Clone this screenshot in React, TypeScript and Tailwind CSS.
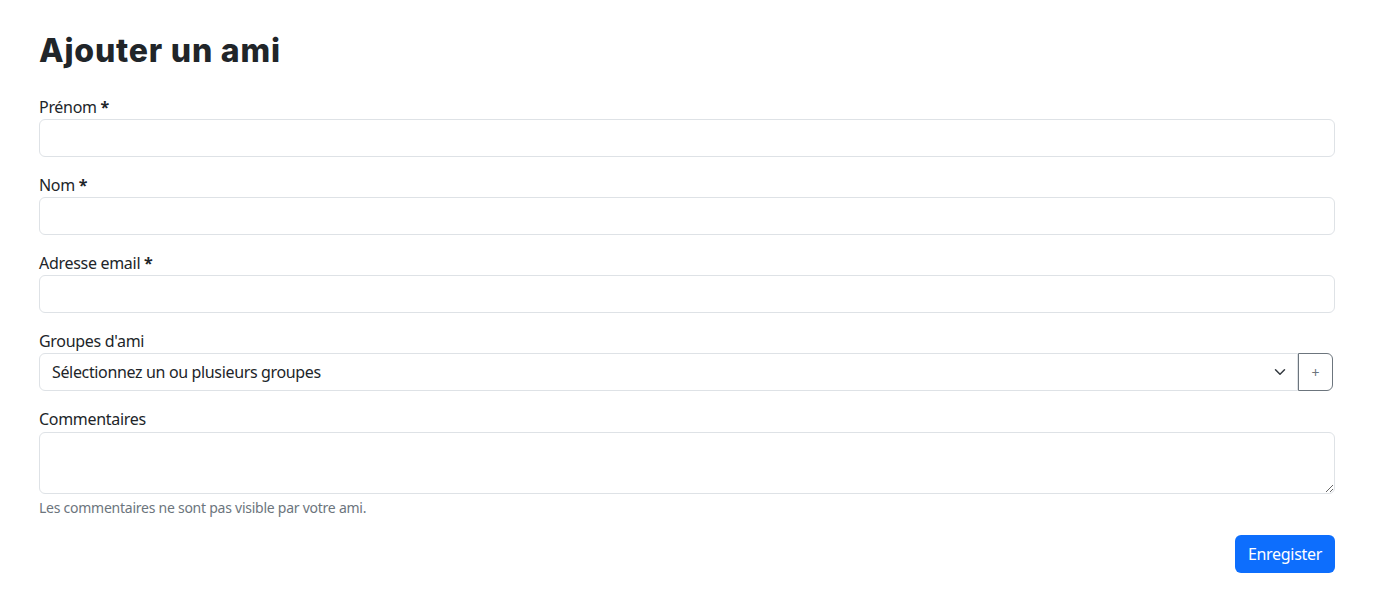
import React from "react";

const font = { fontFamily: '"Noto Sans", "Open Sans", sans-serif' };

function Field({ label, required }: { label: string; required?: boolean }) {
  return (
    <div className="mb-4">
      <label className="block text-[16px] leading-[24px] text-[#212529] tracking-[-0.3px]">
        {label} {required && <span className="font-bold">*</span>}
      </label>
      <input className="block w-full h-[38px] border border-[#dee2e6] rounded-[6px] px-3 outline-none bg-white" />
    </div>
  );
}

export default function App() {
  return (
    <div className="min-h-screen bg-white text-[#212529]" style={font}>
      <div className="w-[1296px] ml-[39px] pt-[32px]">
        <h2 className="font-['Inter',sans-serif] font-extrabold text-[32px] leading-[38px] mb-[25px] text-[#212529] tracking-[0.8px]">
          Ajouter un ami
        </h2>
        <Field label="Prénom" required />
        <Field label="Nom" required />
        <Field label="Adresse email" required />
        <div className="mb-4">
          <label className="block text-[16px] leading-[24px] tracking-[-0.3px]">Groupes d'ami</label>
          <div className="flex">
            <div className="flex-1 h-[38px] border border-[#dee2e6] rounded-l-[6px] flex items-center pl-3 pr-2 justify-between">
              <span className="text-[16px] tracking-[-0.35px]">Sélectionnez un ou plusieurs groupes</span>
              <svg width="16" height="12" viewBox="0 0 16 16" className="mr-[1px]">
                <path d="m2 5 6 6 6-6" fill="none" stroke="#343a40" strokeWidth="2" strokeLinecap="round" strokeLinejoin="round" />
              </svg>
            </div>
            <button className="w-[35px] h-[38px] border border-[#6c757d] rounded-r-[6px] text-[#6c757d] text-[14px] flex items-center justify-center">
              +
            </button>
            <div className="w-[2px]" />
          </div>
        </div>
        <div className="mb-[17px]">
          <label className="block text-[16px] leading-[24px] tracking-[-0.3px]">Commentaires</label>
          <textarea className="block w-full h-[62px] mt-[1px] border border-[#dee2e6] rounded-[6px] px-3 py-1.5 outline-none" />
          <div className="mt-[3px] text-[14px] leading-[21px] text-[#6c757d] tracking-[-0.25px]">
            Les commentaires ne sont pas visible par votre ami.
          </div>
        </div>
        <div className="flex justify-end">
          <button className="h-[38px] w-[100px] bg-[#0d6efd] text-white rounded-[6px] text-[16px] tracking-[-0.3px]">Enregister</button>
        </div>
      </div>
    </div>
  );
}
